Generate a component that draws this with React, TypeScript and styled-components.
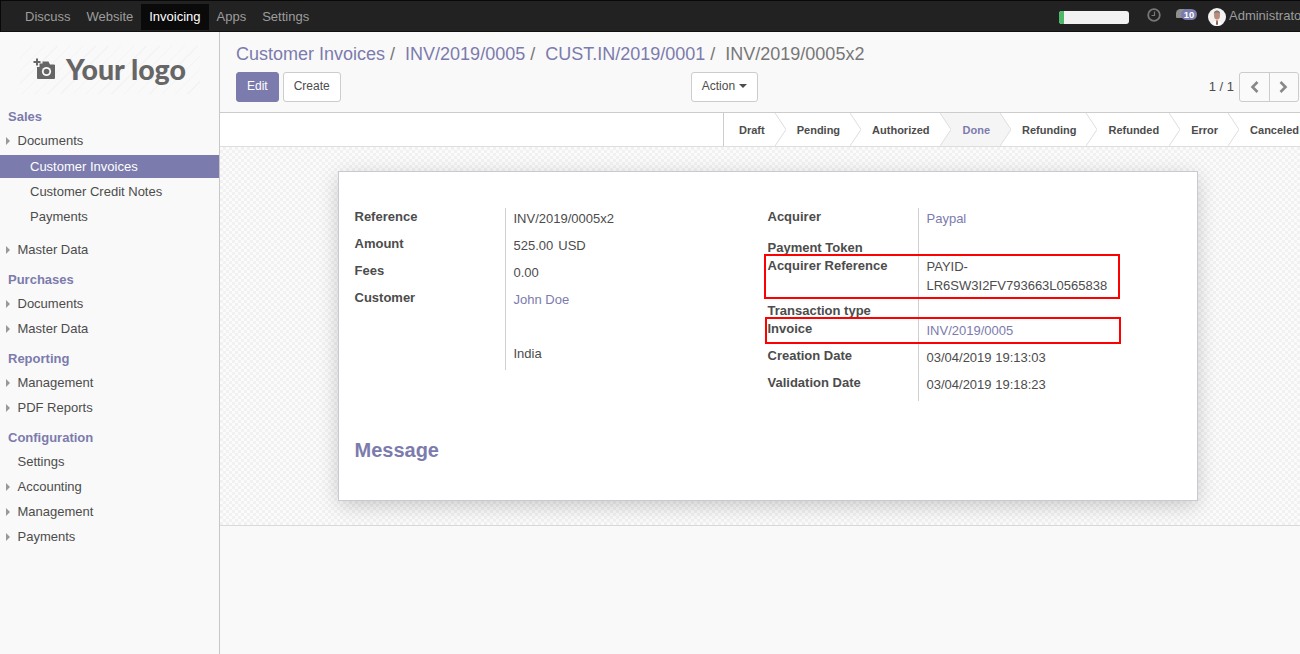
import React from 'react';
import styled, { createGlobalStyle } from 'styled-components';

const Global = createGlobalStyle`
  html, body { margin: 0; height: 100%; overflow: hidden; }
  body { font-family: "Liberation Sans", Arial, sans-serif; font-size: 13px; line-height: 1.42857; color: #4c4c4c; background: #fff; }
  #root { height: 100%; }
  * { box-sizing: border-box; }
`;

const Page = styled.div`display: flex; flex-direction: column; height: 654px; width: 1300px; overflow: hidden;`;

const TopBar = styled.header`
  height: 32px; flex: none; display: flex; align-items: center; background: #222;
  border: 1px solid #080808; border-width: 1px 0 0 1px; padding-left: 16px; padding-top: 1px;
  border-bottom: 1px solid #111; overflow: hidden;
`;
const TopLink = styled.a<{ $active?: boolean }>`
  height: 26px; line-height: 26px; padding: 0 8px; color: ${p => (p.$active ? '#fff' : '#9d9d9d')};
  background: ${p => (p.$active ? '#0a0a0a' : 'transparent')};
`;
const TopRight = styled.div`margin-left: auto; display: flex; align-items: center; width: 241px; flex: none; height: 100%;`;
const Progress = styled.div`
  flex: none; width: 70px; height: 13px; border-radius: 3px; background: #f2f2f2; overflow: hidden; margin-right: 18px; margin-top: 2px;
  &::before { content: ''; display: block; width: 5px; height: 100%; background: #4cb868; }
`;
const ClockIcon = styled.svg`width: 14px; height: 14px; margin-right: 15px; margin-top: -3px; flex: none;`;
const Chat = styled.div`position: relative; width: 22px; height: 13px; margin-right: 10px; margin-top: -3px; flex: none;`;
const ChatBack = styled.span`position: absolute; left: 0; top: 0; width: 12px; height: 9px; background: #8f8f8f; border-radius: 5px 5px 5px 1px;`;
const ChatBadge = styled.span`
  position: absolute; left: 5px; top: 0; width: 16px; height: 11px; border-radius: 6px; background: #7c7bad;
  color: #fff; font-size: 9.5px; font-weight: 700; line-height: 11px; text-align: center;
`;
const Avatar = styled.svg`width: 18px; height: 18px; flex: none; margin-right: 3px;`;
const UserName = styled.span`color: #9d9d9d; white-space: nowrap; flex: none;`;

const Body = styled.div`flex: 1; display: flex; min-height: 0;`;
const Sidebar = styled.aside`width: 220px; flex: none; background: #f9f9f9; border-right: 1px solid #c8c8c8; padding-top: 14px;`;
const Logo = styled.div`
  width: 180px; height: 48px; margin: 0 0 13px 20px; display: flex; align-items: center; gap: 10px; padding: 0 0 2px 13px;
  background: repeating-linear-gradient(135deg, #f9f9f9 0 8px, #f3f3f3 8px 9px);
`;
const LogoText = styled.span`font-family: Lato, sans-serif; font-weight: 900; font-size: 28.500px; line-height: 1; color: #666; white-space: nowrap;`;
const CameraIcon = styled.svg`width: 23px; height: 22px; flex: none;`;

const Heading = styled.div`font-weight: 700; color: #7c7bad; padding: 0 8px; line-height: 19px; margin-top: 9px; margin-bottom: 3px;`;
const NavList = styled.div`display: flex; flex-direction: column; gap: 2px;`;
const SubList = styled.div`display: flex; flex-direction: column; gap: 2px; margin: 3px 0 8px;`;
const NavItem = styled.div`display: flex; align-items: center; padding: 2px 0 2px 6px; line-height: 19px; color: #4c4c4c;`;
const Caret = styled.span<{ $hidden?: boolean }>`
  width: 0; height: 0; margin-right: 7.500px; border-left: 4px solid ${p => (p.$hidden ? 'transparent' : '#999')};
  border-top: 4px solid transparent; border-bottom: 4px solid transparent;
`;
const SubItem = styled.div<{ $active?: boolean }>`
  padding: 2px 0 2px 30px; line-height: 19px; color: ${p => (p.$active ? '#fff' : '#4c4c4c')}; background: ${p => (p.$active ? '#7c7bad' : 'transparent')};
`;

const Main = styled.main`flex: 1; min-width: 0; display: flex; flex-direction: column; background: #f9f9f9;`;
const ControlPanel = styled.div`height: 81px; flex: none; padding: 9px 0 0 16px; border-bottom: 1px solid #ccc; background: #f9f9f9;`;
const Crumbs = styled.div`display: flex; font-size: 18px; line-height: 26px; white-space: nowrap; margin-bottom: 5px;`;
const Crumb = styled.a`color: #7c7bad; &::after { content: '/'; color: #777; margin: 0 10px 0 5px; }`;
const CrumbLast = styled.span`color: #777;`;
const Controls = styled.div`display: flex; align-items: center; height: 30px;`;
const Btn = styled.button<{ $primary?: boolean }>`
  height: 30px; padding: 0 10px; border-radius: 3px; font: inherit; font-size: 12px; cursor: pointer; white-space: nowrap;
  border: 1px solid ${p => (p.$primary ? '#7c7bad' : '#ccc')}; background: ${p => (p.$primary ? '#7c7bad' : '#fff')};
  color: ${p => (p.$primary ? '#fff' : '#4c4c4c')}; margin-right: 4px;
`;
const ActionSlot = styled.div`margin-left: 346px; display: flex;`;
const BtnCaret = styled.span`
  display: inline-block; margin-left: 1px; vertical-align: 2px; border-top: 4px solid #4c4c4c;
  border-left: 4px solid transparent; border-right: 4px solid transparent;
`;
const Pager = styled.div`margin-left: auto; display: flex; align-items: center; padding-right: 1px;`;
const PagerText = styled.span`margin-right: 5px;`;
const PagerBtns = styled.div`display: flex; width: 60px; height: 30px; border: 1px solid #ccc; border-radius: 3px; background: #fafafa;`;
const PagerBtn = styled.div`flex: 1; display: flex; align-items: center; justify-content: center; & + & { border-left: 1px solid #ccc; }`;
const Chevron = styled.svg`width: 9px; height: 12px;`;

const StatusBar = styled.div`height: 34px; flex: none; display: flex; justify-content: flex-end; background: #fff; border-bottom: 1px solid #ddd; overflow: hidden;`;
const Step = styled.div<{ $first?: boolean; $current?: boolean; $last?: boolean }>`
  position: relative; display: flex; align-items: center; height: 33px; padding-top: 2px; font-size: 11px; font-weight: 700; white-space: nowrap; flex: none;
  padding-right: ${p => (p.$last ? 1 : 10)}px;
  padding-left: ${p => (p.$first ? 15 : p.$current ? 23 : 22)}px;
  border-left: ${p => (p.$first ? '1px solid #ccc' : '0')};
  color: ${p => (p.$current ? '#7c7bad' : '#4c4c4c')};
  background: ${p => (p.$current ? '#f5f5f5' : '#fff')};
`;
const StepArrow = styled.svg`position: absolute; left: 100%; top: 0; width: 11px; height: 33px; z-index: 1;`;

const Content = styled.div`
  height: 379px; flex: none; padding: 24px 0 0 118px; border-bottom: 1px solid #d9d9d9;
  background-color: #fbfbfb;
  background-image: conic-gradient(#f1f1f1 25%, transparent 0 50%, #f1f1f1 0 75%, transparent 0);
  background-size: 6px 6px;
`;
const Sheet = styled.section`
  position: relative; width: 860px; height: 330px; background: #fff; border: 1px solid #c9c9d4; box-shadow: 0 5px 20px -1px rgba(0,0,0,0.2);
  padding: 36px 16px 0 15.500px;
`;
const Groups = styled.div`display: flex; align-items: flex-start;`;
const Group = styled.div`display: grid; grid-template-columns: 150.500px 1fr; width: 413px;`;
const Label = styled.div<{ $h: number }>`height: ${p => p.$h}px; font-weight: 700; line-height: 18px;`;
const Value = styled.div<{ $tight?: boolean }>`
  border-left: 1px solid #d0d0d0; padding: ${p => (p.$tight ? 1 : 2)}px 0 0 7.500px; line-height: 18.500px; color: #4c4c4c;
`;
const LinkText = styled.a`color: #7c7bad;`;
const Currency = styled.span`margin-left: 5px;`;
const Spacer = styled.div`height: 35.500px;`;
const Message = styled.h2`margin: 35px 0 0; font-size: 20px; font-weight: 700; line-height: 28px; color: #7c7bad;`;
const Highlight = styled.div<{ $left: number; $top: number; $w: number; $h: number }>`
  position: absolute; left: ${p => p.$left}px; top: ${p => p.$top}px; width: ${p => p.$w}px; height: ${p => p.$h}px;
  border: 2px solid #f00; pointer-events: none;
`;
const Rest = styled.div`flex: 1; background: #f9f9f9;`;

const sections = [
  { title: 'Sales', items: [{ label: 'Documents', sub: ['Customer Invoices', 'Customer Credit Notes', 'Payments'] }, { label: 'Master Data' }] },
  { title: 'Purchases', items: [{ label: 'Documents' }, { label: 'Master Data' }] },
  { title: 'Reporting', items: [{ label: 'Management' }, { label: 'PDF Reports' }] },
  { title: 'Configuration', items: [{ label: 'Settings', plain: true }, { label: 'Accounting' }, { label: 'Management' }, { label: 'Payments' }] },
] as { title: string; items: { label: string; sub?: string[]; plain?: boolean }[] }[];

const steps = ['Draft', 'Pending', 'Authorized', 'Done', 'Refunding', 'Refunded', 'Error', 'Canceled'];

export default function App() {
  return (
    <Page>
      <Global />
      <TopBar>
        {['Discuss', 'Website', 'Invoicing', 'Apps', 'Settings'].map(n => (
          <TopLink key={n} $active={n === 'Invoicing'}>{n}</TopLink>
        ))}
        <TopRight>
          <Progress />
          <ClockIcon viewBox="0 0 14 14" fill="none" stroke="#777" strokeWidth="1.8">
            <circle cx="7" cy="7" r="5.800" />
            <path d="M7.500 3.500V7.500H4.500" strokeWidth="1.200" />
          </ClockIcon>
          <Chat>
            <ChatBack />
            <ChatBadge>10</ChatBadge>
          </Chat>
          <Avatar viewBox="0 0 18 18">
            <circle cx="9" cy="9" r="9" fill="#f4f2f0" />
            <path d="M3.500 16c1-3 3-3.800 5.500-3.800s4.500.8 5.500 3.800a9 9 0 0 1-11 0z" fill="#fff" stroke="#ccc" strokeWidth=".4" />
            <path d="M8.300 12.200h1.400l.4 4.600H7.900z" fill="#8c5a52" />
            <ellipse cx="9" cy="7.400" rx="3" ry="4" fill="#b98d78" />
            <path d="M5.900 6.600C5.800 3.400 7.500 2.600 9 2.600s3.300.8 3.100 4C11.500 4.900 10.500 4.600 9 4.600s-2.500.3-3.100 2z" fill="#77777a" />
          </Avatar>
          <UserName>Administrator</UserName>
        </TopRight>
      </TopBar>
      <Body>
        <Sidebar>
          <Logo>
            <CameraIcon viewBox="0 0 23 22">
              <path d="M3 0.500h2V3h2.500v2H5v2.500H3V5H0.500V3H3z" fill="#666" />
              <path d="M4 9V20a1 1 0 0 0 1 1h16a1 1 0 0 0 1-1V7.500a1 1 0 0 0-1-1h-4l-1.500-3H9.500V5.500H6.500V9z" fill="#666" />
              <circle cx="13.500" cy="13.500" r="4.600" fill="#f9f9f9" />
              <circle cx="13.500" cy="13.500" r="2.800" fill="#666" />
            </CameraIcon>
            <LogoText>Your logo</LogoText>
          </Logo>
          {sections.map(s => (
            <div key={s.title}>
              <Heading>{s.title}</Heading>
              <NavList>
                {s.items.map(i => (
                  <div key={i.label}>
                    <NavItem>
                      <Caret $hidden={i.plain} />
                      {i.label}
                    </NavItem>
                    {i.sub && (
                      <SubList>
                        {i.sub.map(x => (
                          <SubItem key={x} $active={x === 'Customer Invoices'}>{x}</SubItem>
                        ))}
                      </SubList>
                    )}
                  </div>
                ))}
              </NavList>
            </div>
          ))}
        </Sidebar>
        <Main>
          <ControlPanel>
            <Crumbs>
              <Crumb>Customer Invoices</Crumb>
              <Crumb>INV/2019/0005</Crumb>
              <Crumb>CUST.IN/2019/0001</Crumb>
              <CrumbLast>INV/2019/0005x2</CrumbLast>
            </Crumbs>
            <Controls>
              <Btn $primary>Edit</Btn>
              <Btn>Create</Btn>
              <ActionSlot>
                <Btn>Action <BtnCaret /></Btn>
              </ActionSlot>
              <Pager>
                <PagerText>1 / 1</PagerText>
                <PagerBtns>
                  <PagerBtn>
                    <Chevron viewBox="0 0 9 12" fill="none" stroke="#888" strokeWidth="2.600"><path d="M7.500 1L2.500 6L7.500 11" /></Chevron>
                  </PagerBtn>
                  <PagerBtn>
                    <Chevron viewBox="0 0 9 12" fill="none" stroke="#888" strokeWidth="2.600"><path d="M1.500 1L6.500 6L1.500 11" /></Chevron>
                  </PagerBtn>
                </PagerBtns>
              </Pager>
            </Controls>
          </ControlPanel>
          <StatusBar>
            {steps.map((s, i) => (
              <Step key={s} $first={i === 0} $last={i === steps.length - 1} $current={s === 'Done'}>
                {s}
                {i < steps.length - 1 && (
                  <StepArrow viewBox="0 0 11 33">
                    <polygon points="0,0 11,16.500 0,33" fill={s === 'Done' ? '#f5f5f5' : '#fff'} />
                    <polyline points="0,0 11,16.500 0,33" fill="none" stroke="#ddd" />
                  </StepArrow>
                )}
              </Step>
            ))}
          </StatusBar>
          <Content>
            <Sheet>
              <Groups>
                <Group>
                  <Label $h={27}>Reference</Label><Value>INV/2019/0005x2</Value>
                  <Label $h={27}>Amount</Label><Value>525.00<Currency>USD</Currency></Value>
                  <Label $h={27}>Fees</Label><Value>0.00</Value>
                  <Label $h={81}>Customer</Label>
                  <Value><LinkText>John Doe</LinkText><Spacer />India</Value>
                </Group>
                <Group>
                  <Label $h={31}>Acquirer</Label><Value><LinkText>Paypal</LinkText></Value>
                  <Label $h={18}>Payment Token</Label><Value />
                  <Label $h={45}>Acquirer Reference</Label><Value $tight>PAYID-<br />LR6SW3I2FV793663L0565838</Value>
                  <Label $h={18}>Transaction type</Label><Value />
                  <Label $h={27}>Invoice</Label><Value><LinkText>INV/2019/0005</LinkText></Value>
                  <Label $h={27}>Creation Date</Label><Value>03/04/2019 19:13:03</Value>
                  <Label $h={27}>Validation Date</Label><Value>03/04/2019 19:18:23</Value>
                </Group>
              </Groups>
              <Message>Message</Message>
              <Highlight $left={425} $top={82} $w={356} $h={45} />
              <Highlight $left={426} $top={145} $w={356} $h={27} />
            </Sheet>
          </Content>
          <Rest />
        </Main>
      </Body>
    </Page>
  );
}
